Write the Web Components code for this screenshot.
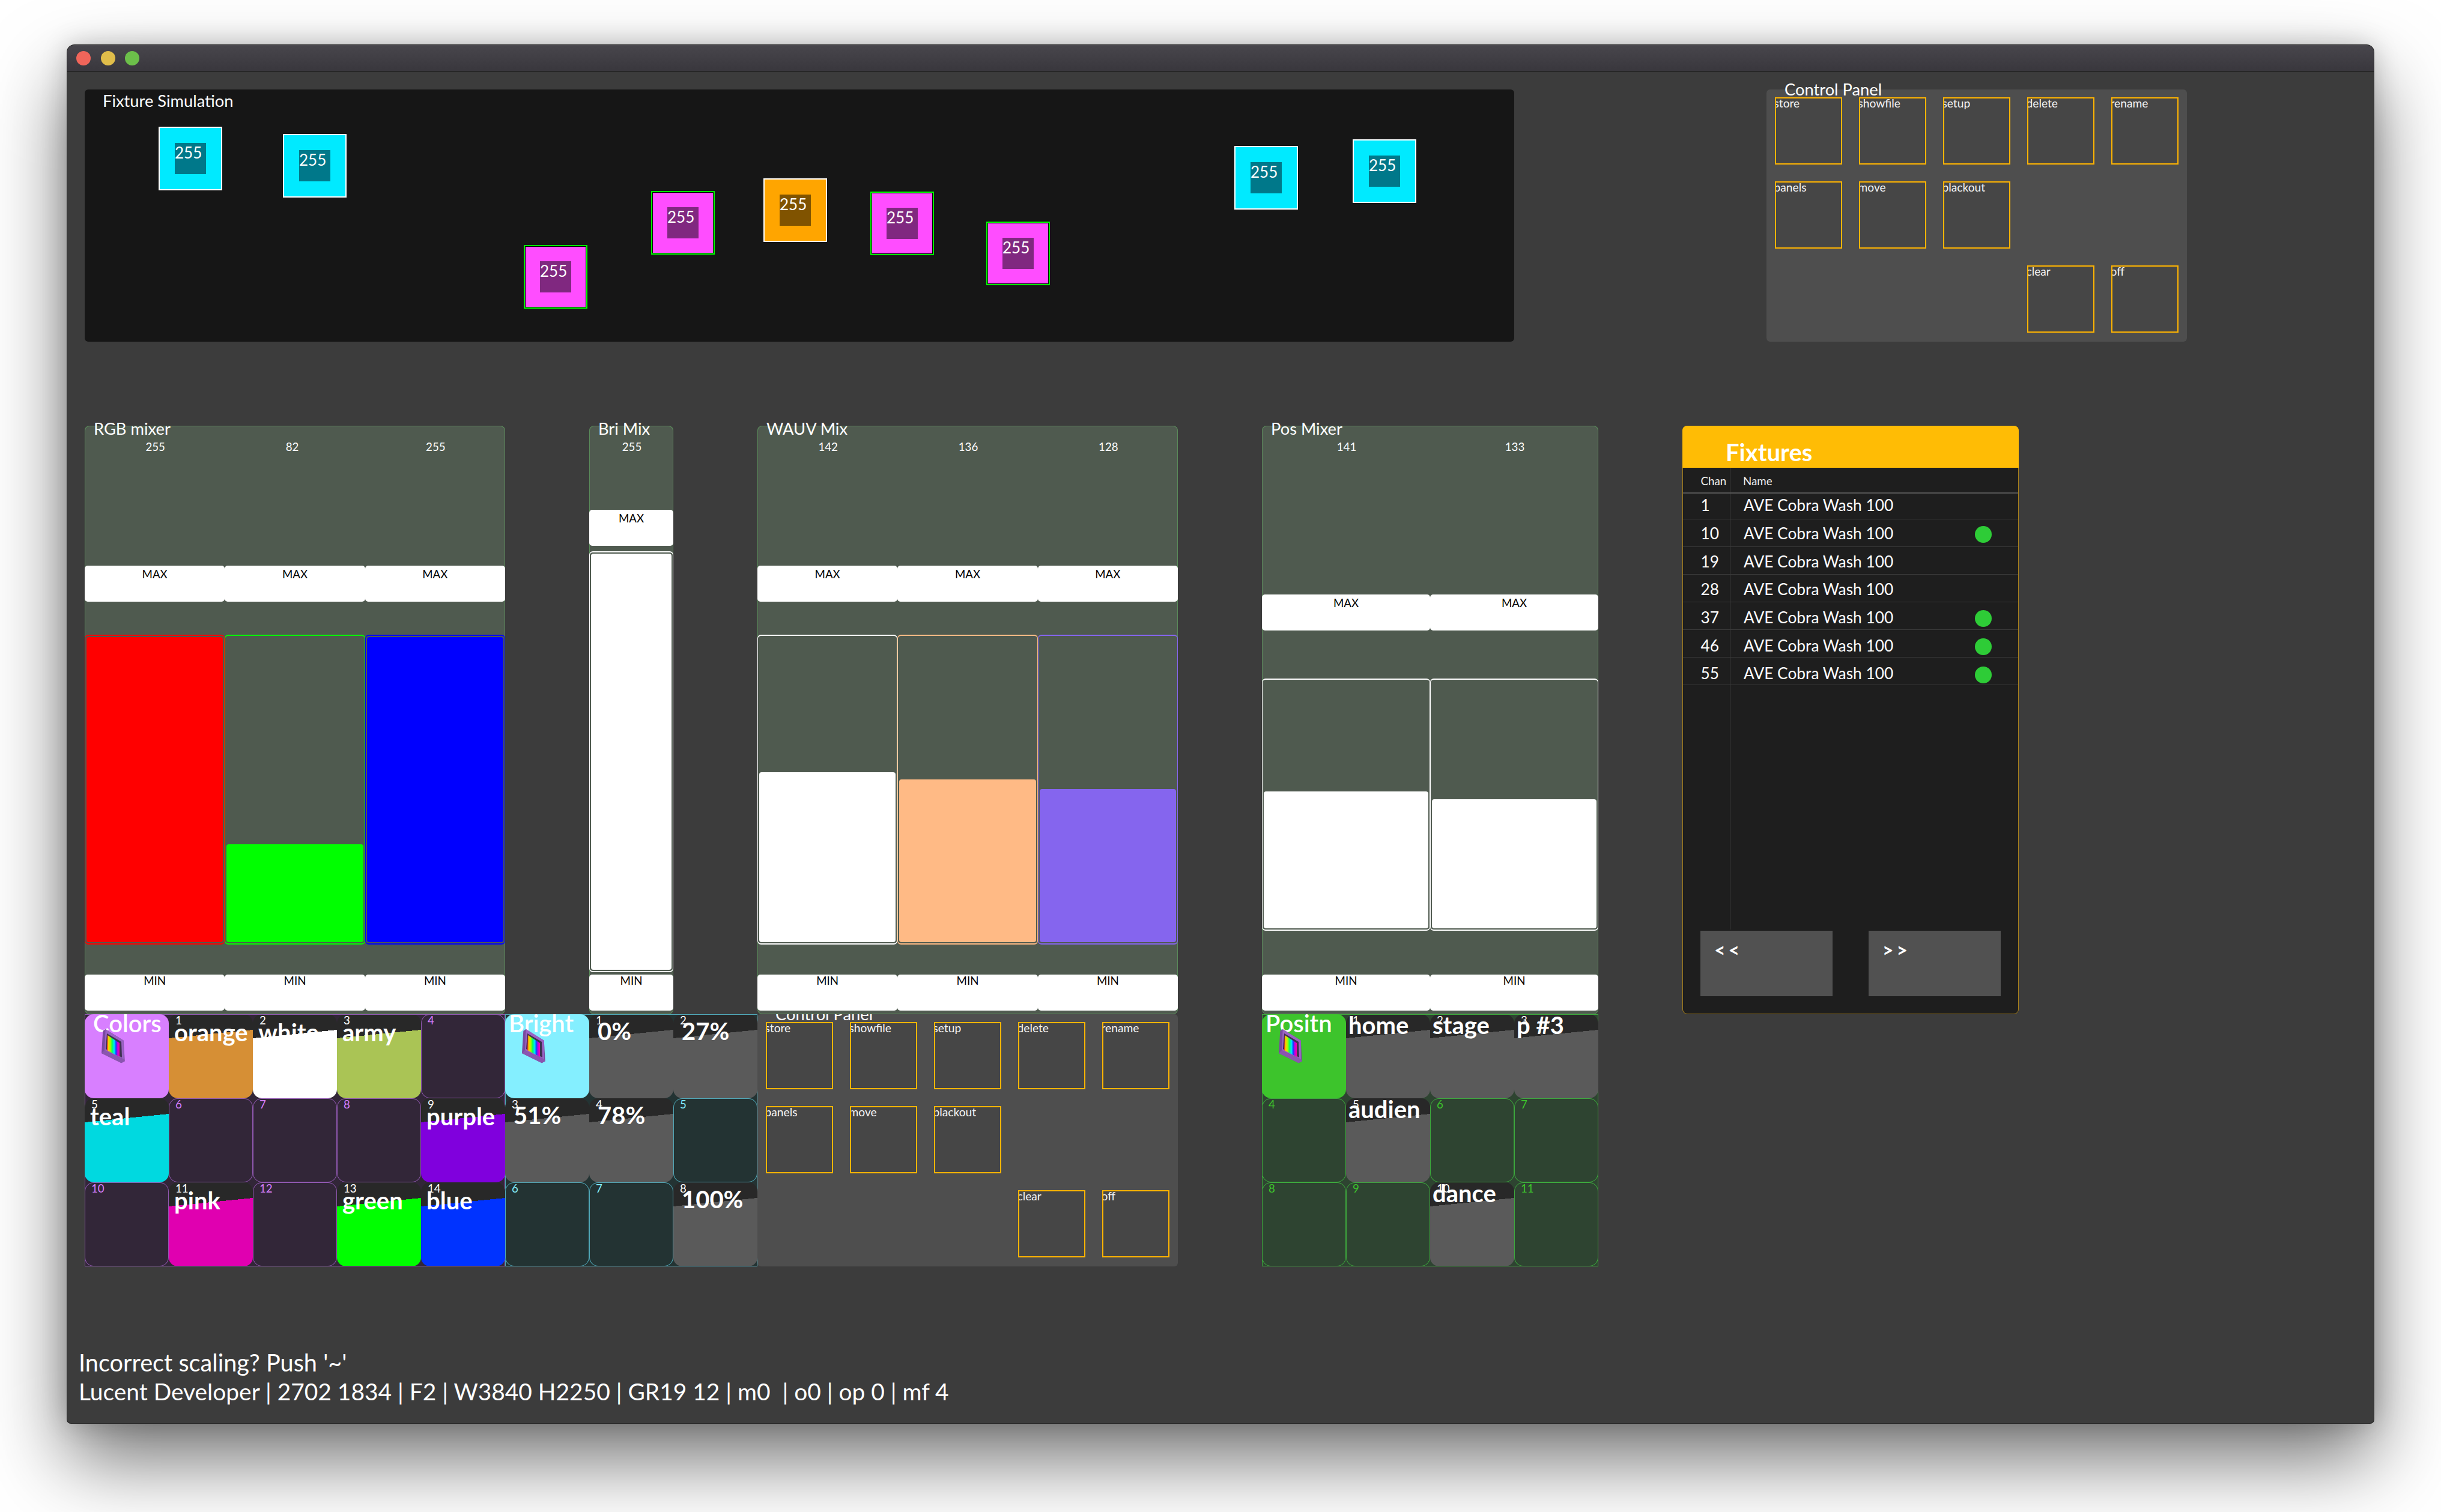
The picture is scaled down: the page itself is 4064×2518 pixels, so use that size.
<!DOCTYPE html>
<html><head><meta charset="utf-8">
<style>
html,body{margin:0;padding:0;background:#fff;}
body{font-family:Lato,"Noto Sans",sans-serif;color:#fff;width:4064px;height:2518px;overflow:hidden;}
</style></head>
<body>
<app-window>
  <sim-panel style="grid-area:1/1/4/18">
    <sim-fixture x="123" y="62" kind="cyan"></sim-fixture>
    <sim-fixture x="330" y="74" kind="cyan"></sim-fixture>
    <sim-fixture x="731" y="259" kind="mag"></sim-fixture>
    <sim-fixture x="943" y="169" kind="mag"></sim-fixture>
    <sim-fixture x="1130" y="148" kind="org"></sim-fixture>
    <sim-fixture x="1308" y="170" kind="mag"></sim-fixture>
    <sim-fixture x="1501" y="220" kind="mag"></sim-fixture>
    <sim-fixture x="1914" y="94" kind="cyan"></sim-fixture>
    <sim-fixture x="2111" y="83" kind="cyan"></sim-fixture>
  </sim-panel>
  <control-panel style="grid-area:1/21/4/26"></control-panel>

  <mixer-panel title-text="RGB mixer" style="grid-area:5/1/12/6">
    <fader-strip value="255" color="#ff0000" head="233" g1="55" track="516" g2="50"></fader-strip>
    <fader-strip value="82" vx="-9" color="#00ff00" head="233" g1="55" track="516" g2="50"></fader-strip>
    <fader-strip value="255" color="#0000ff" head="233" g1="55" track="516" g2="50"></fader-strip>
  </mixer-panel>
  <mixer-panel title-text="Bri Mix" style="grid-area:5/7/12/8">
    <fader-strip value="255" color="#ffffff" head="140" g1="9" track="701" g2="4"></fader-strip>
  </mixer-panel>
  <mixer-panel title-text="WAUV Mix" style="grid-area:5/9/12/14">
    <fader-strip value="142" color="#ffffff" head="233" g1="55" track="516" g2="50"></fader-strip>
    <fader-strip value="136" color="#ffba85" head="233" g1="55" track="516" g2="50"></fader-strip>
    <fader-strip value="128" color="#8565ee" head="233" g1="55" track="516" g2="50"></fader-strip>
  </mixer-panel>
  <mixer-panel title-text="Pos Mixer" style="grid-area:5/15/12/19">
    <fader-strip value="141" color="#ffffff" head="281" g1="80" track="420" g2="73"></fader-strip>
    <fader-strip value="133" color="#ffffff" head="281" g1="80" track="420" g2="73"></fader-strip>
  </mixer-panel>

  <fixture-table style="grid-area:5/20/12/24"></fixture-table>

  <pad-group cols="5" accent="#d87fff" empty="#322638" line="#9058b0" lx="9" ly="9.5" style="grid-area:12/1/15/6">
    <pad-cell title-text="Colors" tx="14"></pad-cell>
    <pad-cell num="1" label="orange" color="#d68f35"></pad-cell>
    <pad-cell num="2" label="white" color="#ffffff"></pad-cell>
    <pad-cell num="3" label="army" color="#aac455"></pad-cell>
    <pad-cell num="4"></pad-cell>
    <pad-cell num="5" label="teal" color="#00d9e0"></pad-cell>
    <pad-cell num="6"></pad-cell>
    <pad-cell num="7"></pad-cell>
    <pad-cell num="8"></pad-cell>
    <pad-cell num="9" label="purple" color="#8000dd"></pad-cell>
    <pad-cell num="10"></pad-cell>
    <pad-cell num="11" label="pink" color="#e000b0"></pad-cell>
    <pad-cell num="12"></pad-cell>
    <pad-cell num="13" label="green" color="#00ff00"></pad-cell>
    <pad-cell num="14" label="blue" color="#0033ff"></pad-cell>
  </pad-group>

  <pad-group cols="3" accent="#84efff" empty="#233333" line="#50a8b8" lx="14" ly="7.5" style="grid-area:12/6/15/9">
    <pad-cell title-text="Bright" tx="6"></pad-cell>
    <pad-cell num="1" label="0%" color="#5a5a5a"></pad-cell>
    <pad-cell num="2" label="27%" color="#5a5a5a"></pad-cell>
    <pad-cell num="3" label="51%" color="#5a5a5a"></pad-cell>
    <pad-cell num="4" label="78%" color="#5a5a5a"></pad-cell>
    <pad-cell num="5"></pad-cell>
    <pad-cell num="6"></pad-cell>
    <pad-cell num="7"></pad-cell>
    <pad-cell num="8" label="100%" color="#5a5a5a"></pad-cell>
  </pad-group>

  <control-panel style="grid-area:12/9/15/14"></control-panel>

  <pad-group cols="4" accent="#3dc42c" empty="#2e4431" line="#3da83d" lx="4" ly="-2" style="grid-area:12/15/15/19">
    <pad-cell title-text="Positn" tx="6"></pad-cell>
    <pad-cell num="1" label="home" color="#5a5a5a"></pad-cell>
    <pad-cell num="2" label="stage" color="#5a5a5a"></pad-cell>
    <pad-cell num="3" label="p #3" color="#5a5a5a"></pad-cell>
    <pad-cell num="4"></pad-cell>
    <pad-cell num="5" label="audien" color="#5a5a5a"></pad-cell>
    <pad-cell num="6"></pad-cell>
    <pad-cell num="7"></pad-cell>
    <pad-cell num="8"></pad-cell>
    <pad-cell num="9"></pad-cell>
    <pad-cell num="10" label="dance" color="#5a5a5a"></pad-cell>
    <pad-cell num="11"></pad-cell>
  </pad-group>

  <status-lines slot="status">
    <div style="font-size:39.7px">Incorrect scaling? Push '~'</div>
    <div style="font-size:38.9px">Lucent Developer | 2702 1834 | F2 | W3840 H2250 | GR19 12 | m0&nbsp; | o0 | op 0 | mf 4</div>
  </status-lines>
</app-window>

<script>
function el(name, html){
  customElements.define(name, class extends HTMLElement{
    connectedCallback(){
      if(this.shadowRoot) return;
      const s=this.attachShadow({mode:'open'});
      s.innerHTML = typeof html==='function' ? html(this) : html;
    }
  });
}
const a=(e,n,d='')=>e.getAttribute(n)??d;
const esc=t=>t.replace(/&/g,'&amp;').replace(/</g,'&lt;');

el('app-window',`<style>
:host{display:block;position:relative;box-sizing:border-box;width:3840px;height:2295px;margin:75px 0 0 112px;background:#3c3c3c;border-radius:12px 12px 6px 6px;
 box-shadow:0 0 0 1px #222,0 60px 130px rgba(0,0,0,.56),0 0 44px rgba(0,0,0,.2);overflow:visible}
.bar{height:44px;box-sizing:border-box;border-bottom:1px solid #0a0a0a;border-radius:12px 12px 0 0;background:linear-gradient(#48464c,#39373d);display:flex;align-items:center;gap:16.5px;padding-left:15px}
.bar i{width:24px;height:24px;border-radius:50%;display:block}
.grid{display:grid;grid-template-columns:repeat(25,140px);grid-template-rows:repeat(14,140px);padding:30px 0 0 29px}
</style>
<div class="bar"><i style="background:#f0655a"></i><i style="background:#e0bd4a"></i><i style="background:#6cbf4a"></i></div>
<div class="grid"><slot></slot></div>
<slot name="status"></slot>`);

el('sim-panel',`<style>
:host{display:block;position:relative;background:#161616;border-radius:6px;font-size:27.3px}
.t{position:absolute;left:30px;top:5px;line-height:1;white-space:nowrap}
</style><div class="t">Fixture Simulation</div><slot></slot>`);

el('sim-fixture',e=>{
  const k=a(e,'kind');
  const st={cyan:['#00eaff','#00788a','2px solid #fff',''],
            org:['#ffa500','#805300','2px solid #fff',''],
            mag:['#ff4dff','#802880','2px solid #00ff00','inset 0 0 0 1px #000']}[k];
  return `<style>
:host{display:flex;position:absolute;box-sizing:border-box;width:106px;height:106px;left:${a(e,'x')}px;top:${a(e,'y')}px;
 background:${st[0]};border:${st[2]};box-shadow:${st[3]||'none'};align-items:center;justify-content:center}
.in{width:52px;height:52px;background:${st[1]};font-size:26px;line-height:1;padding-top:3px;box-sizing:border-box;white-space:nowrap}
</style><div class="in">255</div>`;
});

el('control-panel',()=>{
  const b=[['store',1,1],['showfile',1,2],['setup',1,3],['delete',1,4],['rename',1,5],
           ['panels',2,1],['move',2,2],['blackout',2,3],['clear',3,4],['off',3,5]];
  return `<style>
:host{display:grid;position:relative;grid-template-columns:repeat(5,140px);grid-template-rows:repeat(3,140px);background:#4e4e4e;border-radius:6px}
.t{position:absolute;left:30px;top:-14.5px;font-size:27.3px;line-height:1;white-space:nowrap}
.b{box-sizing:border-box;width:112px;height:112px;margin:13px 0 0 13.5px;border:2px solid #ffb400;background:#464646;overflow:hidden;font-size:19.2px;line-height:1;color:#f4f4f4}
.b span{display:block;margin:-2px 0 0 -3px;white-space:nowrap}
</style><div class="t">Control Panel</div>`+b.map(x=>`<div class="b" style="grid-area:${x[1]}/${x[2]}"><span>${x[0]}</span></div>`).join('');
});

el('mixer-panel',e=>`<style>
:host{display:flex;position:relative;z-index:2;background:#4f5a4f;box-shadow:inset 0 0 0 1px #5a8a5a;border-radius:8px}
.t{position:absolute;left:15px;top:-9px;font-size:27.3px;line-height:1;white-space:nowrap;z-index:1}
</style><div class="t">${a(e,'title-text')}</div><slot></slot>`);

el('fader-strip',e=>{
  const v=+a(e,'value'),c=a(e,'color'),tr=+a(e,'track');
  const h=Math.round((tr-8)*v/255);
  const vx=+a(e,'vx','2');
  return `<style>
:host{display:grid;flex:1 1 0;min-width:0;grid-template-rows:${a(e,'head')}px 60px ${a(e,'g1')}px ${tr}px ${a(e,'g2')}px 60px;font-size:18.7px;line-height:1;text-align:center}
.v{padding-top:26px;color:#fff;${vx<0?'padding-right:'+(-vx):'padding-left:'+vx}px}
.btn{grid-row:2;background:#fff;color:#000;border-radius:5px;padding-top:5px;box-sizing:border-box}
.min{grid-row:6;padding-top:1px}
.tr{grid-row:4;box-sizing:border-box;border-style:solid;border-width:2px 1px;border-color:${c};padding:2px;border-radius:6px;display:flex;align-items:flex-end}
.f{width:100%;height:${h}px;background:${c};border-radius:4px}
</style><div class="v">${v}</div><div class="btn">MAX</div><div class="tr"><div class="f"></div></div><div class="btn min">MIN</div>`;
});

el('pad-group',e=>`<style>
:host{display:grid;position:relative;grid-template-columns:repeat(${a(e,'cols')},1fr);grid-template-rows:repeat(3,140px);
 background:${a(e,'empty')};box-shadow:inset 0 0 0 1px ${a(e,'line')};
 --accent:${a(e,'accent')};--empty:${a(e,'empty')};--line:${a(e,'line')};--lx:${a(e,'lx')}px;--ly:${a(e,'ly')}px}
:host::after{content:"";position:absolute;left:140px;right:0;top:0;height:1px;background:${a(e,'line')}}
:host::before{content:"";position:absolute;left:0;right:0;bottom:0;height:1px;background:${a(e,'line')};z-index:1}
</style><slot></slot>`);

const ICON=`<svg class="ic" viewBox="0 0 39 57" width="39" height="57">
<defs><linearGradient id="rb" x1="0" x2="1" y1="0" y2="0">
<stop offset="0" stop-color="#ff2020"/><stop offset=".12" stop-color="#ffd000"/><stop offset=".28" stop-color="#a0ff00"/><stop offset=".42" stop-color="#00ff60"/><stop offset=".58" stop-color="#00e8ff"/><stop offset=".72" stop-color="#1040ff"/><stop offset=".84" stop-color="#c000e0"/><stop offset="1" stop-color="#ff00a0"/></linearGradient></defs>
<polygon points="6.7,0 36.7,18.7 38.7,53.3 33,56.3 0,40 2.3,2.7" fill="#7a4aa0"/>
<polygon points="6.7,0 36.7,18.7 37,50 5,35" fill="#9a62c4"/>
<polygon points="9,7 33,21 34,47 7,33" fill="#3e3050"/>
<polygon points="10,10 30,23 30,46 9,35" fill="url(#rb)"/>
<polygon points="0,40 5,35 37,50 38.7,53.3 33,56.3" fill="#8a55b0"/>
</svg>`;

el('pad-cell',e=>{
  const title=a(e,'title-text');
  const base=`:host{display:block;position:relative;overflow:hidden;border-radius:15px;box-sizing:border-box}
.n{position:absolute;left:11px;top:1px;font-size:18.7px;line-height:1}
.l{position:absolute;left:var(--lx);top:var(--ly);font-size:40px;font-weight:700;line-height:1;white-space:nowrap}
.h{position:absolute;left:${a(e,'tx','7')}px;top:-5.5px;font-size:40px;font-weight:600;line-height:1;white-space:nowrap}
.ic{position:absolute;left:28px;top:25px}`;
  if(title) return `<style>${base}:host{background:var(--accent)}</style><div class="h">${title}</div>${ICON}`;
  const label=a(e,'label');
  if(label) return `<style>${base}:host{background:linear-gradient(174.29deg,#282828 39.8px,${a(e,'color')} 39.8px)}</style>
<div class="n">${a(e,'num')}</div><div class="l">${esc(label)}</div>`;
  return `<style>${base}:host{background:var(--empty);box-shadow:inset 0 0 0 1px var(--line)}.n{color:var(--accent)}</style><div class="n">${a(e,'num')}</div>`;
});

el('fixture-table',()=>{
  const rows=[[1,0],[10,1],[19,0],[28,0],[37,1],[46,1],[55,1]];
  return `<style>
:host{display:flex;flex-direction:column;position:relative;z-index:1;box-sizing:border-box;background:#1e1e1e;border:1px solid #a8801a;border-radius:8px}
.hd{height:70px;margin:-1px -1px 0;background:#ffbc05;border-radius:8px 8px 0 0;box-sizing:border-box;padding:23.5px 0 0 72px;font-size:40px;font-weight:700;line-height:1}
.tb{height:769px;display:flex;flex-direction:column;background:linear-gradient(#3a3a3a,#3a3a3a) 78px 0/1px 100% no-repeat}
.r{display:flex;align-items:flex-start;box-sizing:border-box;height:46px;border-bottom:1px solid #3a3a3a;font-size:26.3px;line-height:1}
.r.h{height:43px;border-bottom:2px solid #555;padding-top:12.6px;font-size:18.7px;color:#eee}
.c{width:79px;box-sizing:border-box;padding-left:29.5px}
.nm{flex:1;padding-left:22px}
.h .nm{padding-left:21px}
.d{width:28px;height:28px;border-radius:50%;background:#2ecc37;margin:1.4px 44px 0 0}
.ft{display:flex;gap:60px;padding:2px 0 0 29px}
.ft div{width:220px;height:109px;background:#515151;font-size:32px;font-weight:700;letter-spacing:5px;line-height:1;padding:16px 0 0 23px;box-sizing:border-box}
</style><div class="hd">Fixtures</div><div class="tb">
<div class="r h"><span class="c">Chan</span><span class="nm">Name</span></div>`+
rows.map((r,i)=>`<div class="r" style="${i==0?'height:43px;padding-top:6.2px':'padding-top:'+(9.9+.667*(i-1)).toFixed(2)+'px'}"><span class="c">${r[0]}</span><span class="nm">AVE Cobra Wash 100</span>${r[1]?'<i class="d"></i>':''}</div>`).join('')+
`</div><div class="ft"><div>&lt;&lt;</div><div>&gt;&gt;</div></div>`;
});

el('status-lines',`<style>
:host{display:block;margin:136px 0 0 19px;line-height:48px;white-space:nowrap}
</style><slot></slot>`);
</script>
</body></html>
